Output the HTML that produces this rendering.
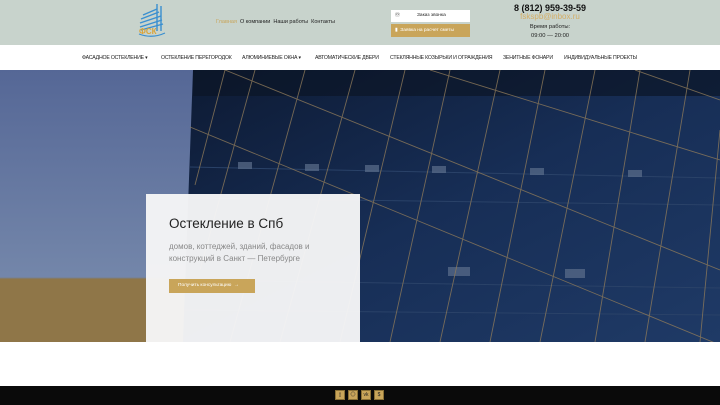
<!DOCTYPE html>
<html><head><meta charset="utf-8"><style>
*{margin:0;padding:0;box-sizing:border-box}
body{width:720px;height:405px;overflow:hidden;font-family:"Liberation Sans","Noto Sans CJK SC",sans-serif;background:#fff;position:relative}
.hdr{position:absolute;left:0;top:0;width:720px;height:45px;background:#c8d3cc}
.nav{position:absolute;left:0;top:45px;width:720px;height:25px;background:#fff;font-size:5.2px;color:#222;letter-spacing:-0.2px}
.nav span{position:absolute;top:10px;white-space:nowrap}
.hero{position:absolute;left:0;top:70px;width:720px;height:272px;overflow:hidden}
.card{position:absolute;left:146px;top:194px;width:214px;height:148px;background:rgba(245,245,246,0.97)}
.ft{position:absolute;left:0;top:386px;width:720px;height:19px;background:#0a0a0a}
.ic{position:absolute;top:390px;width:10px;height:10px;background:#c9a55a;border:1px solid #8a7035;font-size:5px;color:#222;text-align:center;line-height:8px}
</style></head><body>
<div class="hdr">
<svg style="position:absolute;left:135px;top:1px" width="34" height="40" viewBox="0 0 34 40">
<g fill="none" stroke="#3a8fd0" stroke-width="1.4">
<path d="M8 14 L22 8"/><path d="M6 18 L24 11"/><path d="M5 22 L26 15"/><path d="M5 26 L27 19"/><path d="M6 29 L28 23"/>
<path d="M22 3 L22 30"/><path d="M26 5 L26 30"/></g>
<path d="M4 33 Q17 38 30 32" stroke="#3a8fd0" stroke-width="1.2" fill="none"/>
<text x="4" y="33" font-size="8" font-weight="bold" fill="#d9a43a" font-family="Liberation Sans">ФСК</text>
</svg>
<div style="position:absolute;left:216px;top:19px;font-size:5.5px;color:#222;white-space:nowrap"><span style="color:#c9a55a">Главная</span>&nbsp; О компании &nbsp;Наши работы &nbsp;Контакты</div>
<div style="position:absolute;left:391px;top:10px;width:79px;height:12px;background:#fff;font-size:4.8px;color:#222;line-height:12px"><span style="position:absolute;left:4px">☏</span><span style="position:absolute;left:26px">Заказ звонка</span></div>
<div style="position:absolute;left:391px;top:24px;width:79px;height:13px;background:#c9a55a;font-size:4.8px;color:#fff;line-height:13px;padding-left:4px">▮ &nbsp;Заявка на расчет сметы</div>
<div style="position:absolute;left:490px;top:3px;width:120px;text-align:center;font-size:9px;font-weight:bold;color:#111">8 (812) 959-39-59</div>
<div style="position:absolute;left:490px;top:12px;width:120px;text-align:center;font-size:8px;color:#d4ae66">fskspb@inbox.ru</div>
<div style="position:absolute;left:490px;top:24px;width:120px;text-align:center;font-size:5.8px;color:#222">Время работы:</div>
<div style="position:absolute;left:490px;top:33px;width:120px;text-align:center;font-size:5.8px;color:#222">09:00 — 20:00</div>
</div>
<div class="nav">
<span style="left:82px">ФАСАДНОЕ ОСТЕКЛЕНИЕ ▾</span>
<span style="left:161px">ОСТЕКЛЕНИЕ ПЕРЕГОРОДОК</span>
<span style="left:242px">АЛЮМИНИЕВЫЕ ОКНА ▾</span>
<span style="left:315px">АВТОМАТИЧЕСКИЕ ДВЕРИ</span>
<span style="left:390px">СТЕКЛЯННЫЕ КОЗЫРЬКИ И ОГРАЖДЕНИЯ</span>
<span style="left:503px">ЗЕНИТНЫЕ ФОНАРИ</span>
<span style="left:564px">ИНДИВИДУАЛЬНЫЕ ПРОЕКТЫ</span>
</div>
<div class="hero">
<svg width="720" height="272" viewBox="0 0 720 272">
<defs><linearGradient id="sky" x1="0" y1="0" x2="0" y2="1"><stop offset="0" stop-color="#556796"/><stop offset="1" stop-color="#7d90b0"/></linearGradient>
<linearGradient id="gl" x1="0" y1="0" x2="1" y2="1"><stop offset="0" stop-color="#0d1a33"/><stop offset="0.5" stop-color="#172e56"/><stop offset="1" stop-color="#1f3a66"/></linearGradient></defs>
<rect width="720" height="272" fill="url(#sky)"/>
<rect x="0" y="208" width="200" height="64" fill="#8f7648"/>
<line x1="0" y1="208" x2="200" y2="208" stroke="#7a7f86" stroke-width="1"/>
<polygon points="193,0 720,0 720,272 183,272" fill="url(#gl)"/>
<rect x="193" y="0" width="527" height="26" fill="#0b1526" opacity="0.7"/>
<g stroke="#2a4268" stroke-width="1"><line x1="190" y1="97" x2="720" y2="108"/><line x1="188" y1="128" x2="720" y2="135"/><line x1="186" y1="210" x2="720" y2="218"/><line x1="185" y1="240" x2="720" y2="245"/></g>
<g fill="#5c6f8c" opacity="0.7"><rect x="238" y="92" width="14" height="7"/><rect x="305" y="94" width="14" height="7"/><rect x="365" y="95" width="14" height="7"/><rect x="432" y="96" width="14" height="7"/><rect x="530" y="98" width="14" height="7"/><rect x="628" y="100" width="14" height="7"/><rect x="448" y="197" width="22" height="9"/><rect x="565" y="199" width="20" height="9"/></g>
<g stroke="#8e7a5a" stroke-width="0.9" opacity="0.8">
<line x1="225" y1="0" x2="195" y2="115"/><line x1="255" y1="0" x2="200" y2="200"/><line x1="305" y1="0" x2="230" y2="272"/><line x1="355" y1="0" x2="280" y2="272"/><line x1="405" y1="0" x2="340" y2="272"/><line x1="450" y1="0" x2="390" y2="272"/><line x1="500" y1="0" x2="440" y2="272"/><line x1="545" y1="0" x2="490" y2="272"/><line x1="595" y1="0" x2="540" y2="272"/><line x1="640" y1="0" x2="595" y2="272"/><line x1="690" y1="0" x2="645" y2="272"/><line x1="720" y1="60" x2="700" y2="272"/>
<line x1="225" y1="0" x2="720" y2="200"/><line x1="190" y1="57" x2="720" y2="275"/><line x1="430" y1="0" x2="720" y2="90"/><line x1="635" y1="0" x2="720" y2="30"/>
</g>
</svg>
</div>
<div class="card">
<div style="position:absolute;left:23px;top:22px;font-size:13.5px;color:#222">Остекление в Спб</div>
<div style="position:absolute;left:23px;top:47px;font-size:8px;line-height:11.5px;color:#888;white-space:nowrap">домов, коттеджей, зданий, фасадов и<br>конструкций в Санкт — Петербурге</div>
<div style="position:absolute;left:23px;top:85px;width:86px;height:14px;background:#c9a55a;color:#fff;font-size:4.8px;line-height:14px;padding-left:9px">Получить консультацию &nbsp;→</div>
</div>
<div class="ft"></div>
<div class="ic" style="left:335px">▯</div>
<div class="ic" style="left:348px">◎</div>
<div class="ic" style="left:361px">vk</div>
<div class="ic" style="left:374px">$</div>
</body></html>
